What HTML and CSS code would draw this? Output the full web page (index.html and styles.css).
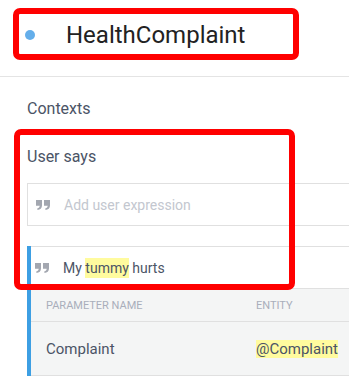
FILE: index.html
```html
<!DOCTYPE html>
<html lang="en">
	<head>
		<meta charset="utf-8">
		<meta name="viewport" content="width=device-width, initial-scale=1.0">
		<title>HealthComplaint</title>
		<link rel="stylesheet" href="styles.css">
	</head>
	<body>
		<div class="header">
			<span class="dot"></span>
			<h1>HealthComplaint</h1>
		</div>
		<div class="section">
			<h2 class="contexts">Contexts</h2>
			<h2 class="says">User says</h2>
			<div class="expressions">
				<div class="expr">
					<svg class="quote" width="14" height="10" viewBox="0 0 14 10"><path d="M0 0h6v5.5c0 2.6-1.8 4.3-4.6 4.5V8.2c1.4-.2 2.2-1 2.3-2.4H0z M8 0h6v5.5c0 2.6-1.8 4.3-4.6 4.5V8.2c1.4-.2 2.2-1 2.3-2.4H8z"/></svg>
					<span class="placeholder">Add user expression</span>
				</div>
				<div class="expr-group">
					<div class="expr">
						<svg class="quote" width="14" height="10" viewBox="0 0 14 10"><path d="M0 0h6v5.5c0 2.6-1.8 4.3-4.6 4.5V8.2c1.4-.2 2.2-1 2.3-2.4H0z M8 0h6v5.5c0 2.6-1.8 4.3-4.6 4.5V8.2c1.4-.2 2.2-1 2.3-2.4H8z"/></svg>
						<span class="said">My <mark>tummy</mark> hurts</span>
					</div>
					<div class="params">
						<div class="row head">
							<span class="col-name">Parameter name</span>
							<span class="col-entity">Entity</span>
						</div>
						<div class="row">
							<span class="col-name">Complaint</span>
							<span class="col-entity"><mark>@Complaint</mark></span>
						</div>
					</div>
				</div>
			</div>
		</div>
		<div class="mark-box box-title"></div>
		<div class="mark-box box-says"></div>
	</body>
</html>
```
FILE: styles.css
```css
body {
	margin: 0;
	font-family: Roboto, "Liberation Sans", sans-serif;
	background-color: white;
	overflow: hidden;
	position: relative;
	height: 392px;
}
.header {
	height: 77px;
	box-sizing: border-box;
	border-bottom: 1px solid #e4e4e4;
	display: flex;
	align-items: center;
	padding-left: 25px;
	padding-bottom: 6px;
}
.dot {
	width: 10px;
	height: 10px;
	border-radius: 50%;
	background-color: #64aeea;
	margin-right: 31px;
}
h1 {
	margin: 0;
	font-size: 24px;
	font-weight: 400;
	color: #222;
	line-height: 28px;
}
.section {
	padding-left: 27px;
}
h2 {
	margin: 0;
	font-size: 16px;
	font-weight: 400;
	line-height: 20px;
	color: #4b5466;
}
.contexts {
	margin-top: 22px;
}
.says {
	margin-top: 28px;
}
.expressions {
	margin-top: 16px;
}
.expr {
	height: 41px;
	display: flex;
	align-items: center;
	border: 1px solid #e0e0e0;
	border-right: none;
	font-size: 14px;
}
.quote {
	fill: #a3a7b0;
	margin-left: 8px;
	margin-right: 14px;
}
.placeholder {
	color: #c3c7cf;
}
.said {
	color: #4b5466;
	line-height: 20px;
}
mark {
	background-color: #fffb9e;
	color: inherit;
}
.said mark {
	padding: 2px 0;
}
.expr-group {
	margin-top: 20px;
	border-left: 4px solid #3d9fe3;
}
.expr-group .expr {
	border-left: none;
	border-bottom: none;
}
.expr-group .quote {
	margin-left: 4px;
}
.params {
	background-color: #f4f5f5;
	border-top: 1px solid #e0e0e0;
}
.row {
	display: flex;
	align-items: center;
	height: 53px;
	border-bottom: 1px solid #e0e0e0;
	padding-left: 15px;
	font-size: 15px;
	color: #4b5466;
}
.row.head {
	height: 32px;
	font-size: 11px;
	text-transform: uppercase;
	color: #a9aebb;
}
.col-name {
	width: 210px;
}
.mark-box {
	position: absolute;
	border: 6px solid #ff0000;
	border-radius: 7px;
}
.box-title {
	left: 13px;
	top: 8px;
	width: 274px;
	height: 40px;
}
.box-says {
	left: 14px;
	top: 129px;
	width: 269px;
	height: 149px;
}
```
